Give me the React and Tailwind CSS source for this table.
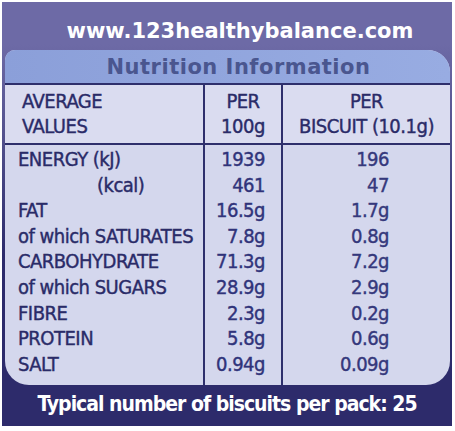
const rows = [
  { label: 'ENERGY (kJ)', a: '1939', b: '196' },
  { label: '(kcal)', a: '461', b: '47', indent: true },
  { label: 'FAT', a: '16.5g', b: '1.7g' },
  { label: 'of which SATURATES', a: '7.8g', b: '0.8g' },
  { label: 'CARBOHYDRATE', a: '71.3g', b: '7.2g' },
  { label: 'of which SUGARS', a: '28.9g', b: '2.9g' },
  { label: 'FIBRE', a: '2.3g', b: '0.2g' },
  { label: 'PROTEIN', a: '5.8g', b: '0.6g' },
  { label: 'SALT', a: '0.94g', b: '0.09g' },
];

const narrow = "font-['DejaVu_Sans_Condensed','Liberation_Sans',sans-serif]";
const wide = "font-['DejaVu_Sans','Open_Sans',sans-serif]";

export default function App() {
  return (
    <div className="w-[455px] h-[431px] bg-white pt-[2px] pl-[2px] pr-[3px] pb-[5px]">
      <div className="w-[450px] h-[424px] flex flex-col bg-gradient-to-b from-[#6d6aa6] from-10% via-[#55538f] via-30% to-[#2d2b6b] to-60%">
        {/* url strip */}
        <div className={`h-[48px] shrink-0 flex items-end justify-center pl-[26px] pb-[8px] ${wide} font-bold text-[21px] leading-none text-white whitespace-nowrap`}>
          www.123healthybalance.com
        </div>

        {/* label panel */}
        <div className="ml-[3px] mr-[2px] h-[335px] shrink-0 flex flex-col rounded-tl-[10px] rounded-tr-[22px] rounded-b-[24px] overflow-hidden bg-[#d4d7ed]">
          <div className={`h-[33px] shrink-0 flex items-center justify-center pl-[22px] pt-[2px] bg-gradient-to-r from-[#8b9fd9] to-[#98ace2] ${wide} font-bold text-[21px] tracking-[0.5px] text-[#4a568f] leading-none whitespace-nowrap`}>
            Nutrition Information
          </div>

          <div className={`flex-1 flex flex-col border-t-2 border-[#2e2f6c] text-[#2a2b68] ${narrow} text-[20px] tracking-[-0.5px] whitespace-nowrap [-webkit-text-stroke:0.4px_currentColor]`}>
            {/* header */}
            <div className="h-[60px] shrink-0 flex border-b-2 border-[#2e2f6c] bg-[#dadcf0] leading-[25px]">
              <div className="w-[200px] border-r-2 border-[#2e2f6c] flex flex-col justify-center pl-[17px]">
                <span>AVERAGE</span>
                <span>VALUES</span>
              </div>
              <div className="w-[78px] border-r-2 border-[#2e2f6c] flex flex-col justify-center items-center">
                <span>PER</span>
                <span>100g</span>
              </div>
              <div className="flex-1 flex flex-col justify-center items-center">
                <span>PER</span>
                <span>BISCUIT (10.1g)</span>
              </div>
            </div>

            {/* body */}
            <div className="flex-1 flex leading-[25.6px]">
              <div className="w-[200px] border-r-2 border-[#2e2f6c] pt-[2px] pl-[13px]">
                {rows.map((r) => (
                  <div key={r.label} className={r.indent ? 'pl-[79px]' : ''}>
                    {r.label}
                  </div>
                ))}
              </div>
              <div className="w-[78px] border-r-2 border-[#2e2f6c] pt-[2px] pr-[16px] text-right text-[#30337a]">
                {rows.map((r) => (
                  <div key={r.label}>{r.a}</div>
                ))}
              </div>
              <div className="flex-1 pt-[2px] pr-[61px] text-right text-[#35387c]">
                {rows.map((r) => (
                  <div key={r.label}>{r.b}</div>
                ))}
              </div>
            </div>
          </div>
        </div>

        {/* footer */}
        <div className={`flex-1 flex items-center justify-center pb-[2px] text-white ${narrow} font-bold text-[21px] tracking-[-1px] leading-none whitespace-nowrap`}>
          Typical number of biscuits per pack: 25
        </div>
      </div>
    </div>
  );
}
